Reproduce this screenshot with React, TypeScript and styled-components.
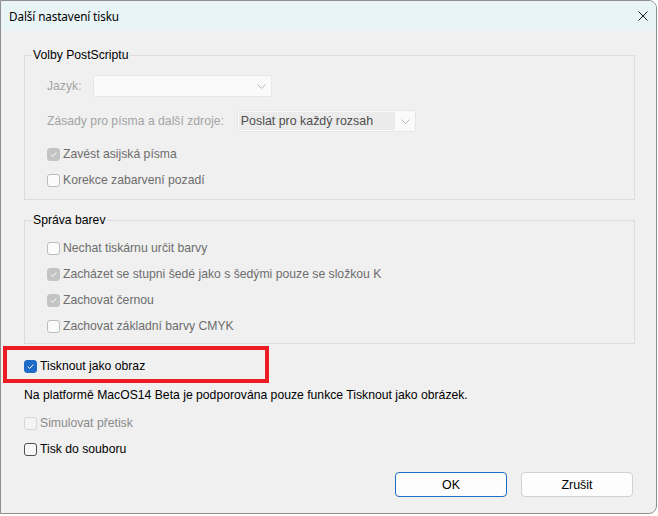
import styled, { createGlobalStyle } from 'styled-components';

const GlobalStyle = createGlobalStyle`
  html, body {
    margin: 0;
    padding: 0;
    background: #ffffff;
  }
  body {
    font-family: "Liberation Sans", Arial, sans-serif;
    font-size: 12.2px;
    color: #000;
  }
`;

const Window = styled.div`
  width: 657px;
  height: 514px;
  box-sizing: border-box;
  border: 1px solid #8f8f8f;
  border-radius: 0 8px 8px 0;
  background: #f0f0f0;
  overflow: hidden;
  display: flex;
  flex-direction: column;
`;

const TitleBar = styled.div`
  height: 30px;
  flex: none;
  background: #e9f4f7;
  display: flex;
  align-items: center;
  justify-content: space-between;
  padding: 0 8px 0 8px;
`;

const Title = styled.span`
  font-family: "Noto Sans", "Open Sans", sans-serif;
  font-size: 11.7px;
  color: #000;
  letter-spacing: -0.1px;
`;

const CloseButton = styled.button`
  width: 10px;
  height: 10px;
  padding: 0;
  border: 0;
  background: none;
  display: flex;
`;

const Body = styled.div`
  flex: 1;
  display: flex;
  flex-direction: column;
  padding: 17px 21px 0 23px;
`;

const Group = styled.fieldset<{ gap?: number }>`
  margin: ${(p) => p.gap ?? 0}px 0 0 0;
  padding: 0;
  border: 1px solid #dcdcdc;
  min-width: 0;
`;

const Legend = styled.legend`
  margin-left: 7px;
  padding: 0 1px;
  line-height: 14px;
  color: #000;
`;

const GroupBody = styled.div<{ pad: string }>`
  padding: ${(p) => p.pad};
  display: flex;
  flex-direction: column;
`;

const FieldRow = styled.div<{ top?: number; gap: number }>`
  display: flex;
  align-items: center;
  gap: ${(p) => p.gap}px;
  height: 22px;
  margin-top: ${(p) => p.top ?? 0}px;
`;

const FieldLabel = styled.span`
  color: #a4a4a4;
`;

const Select = styled.div<{ w: number }>`
  width: ${(p) => p.w}px;
  height: 22px;
  box-sizing: border-box;
  border: 1px solid #e6e6e6;
  border-radius: 2px;
  background: #fafafa;
  display: flex;
  align-items: center;
  padding: 1px 5px 1px 1px;
  gap: 6px;
`;

const SelectValue = styled.div<{ filled?: boolean }>`
  flex: 1;
  align-self: stretch;
  display: flex;
  align-items: center;
  padding-left: 2px;
  background: ${(p) => (p.filled ? '#ebebeb' : 'transparent')};
  color: #4e4e4e;
  font-size: 12.4px;
`;

const CheckRow = styled.div<{ top?: number; tone?: string }>`
  display: flex;
  align-items: center;
  height: 26px;
  margin-top: ${(p) => p.top ?? 0}px;
  color: ${(p) => p.tone ?? '#000'};
`;

type BoxKind = 'on' | 'off' | 'grayOn' | 'grayOff' | 'faintOff';

const boxFill: Record<BoxKind, string> = {
  on: '#1f6cc6',
  off: '#f7f7f7',
  grayOn: '#c3c3c3',
  grayOff: '#fbfbfb',
  faintOff: '#f4f4f4',
};

const boxEdge: Record<BoxKind, string> = {
  on: '#1f6cc6',
  off: '#505050',
  grayOn: '#c3c3c3',
  grayOff: '#bdbdbd',
  faintOff: '#d6d6d6',
};

const Box = styled.span<{ kind: BoxKind }>`
  width: 13px;
  height: 13px;
  box-sizing: border-box;
  border-radius: 3px;
  border: 1px solid ${(p) => boxEdge[p.kind]};
  background: ${(p) => boxFill[p.kind]};
  margin-right: 3px;
  display: flex;
  align-items: center;
  justify-content: center;
  flex: none;
`;

const Highlight = styled.div`
  margin: 2px 0 0 -21px;
  width: 266px;
  height: 37px;
  box-sizing: border-box;
  border: 4px solid #ed1c24;
  padding: 3px 0 0 17px;
`;

const Note = styled.p`
  margin: 5px 0 0 0;
  line-height: 14px;
`;

const Actions = styled.div`
  display: flex;
  justify-content: flex-end;
  gap: 14px;
  margin-top: 10px;
  padding-right: 2px;
`;

const Button = styled.button<{ primary?: boolean }>`
  width: 112px;
  height: 25px;
  box-sizing: border-box;
  border-radius: 4px;
  border: 1px solid ${(p) => (p.primary ? '#1a6fc4' : '#d2d2d2')};
  background: #fdfdfd;
  font-family: "Liberation Sans", Arial, sans-serif;
  font-size: 12.4px;
  color: #000;
  padding: 0;
`;

function Chevron() {
  return (
    <svg width="9" height="5" viewBox="0 0 9 5">
      <path d="M0.5 0.5 L4.5 4.5 L8.5 0.5" fill="none" stroke="#b8b8b8" strokeWidth="1" />
    </svg>
  );
}

function Checkbox({ kind }: { kind: BoxKind }) {
  const checked = kind === 'on' || kind === 'grayOn';
  return (
    <Box kind={kind}>
      {checked && (
        <svg width="9" height="9" viewBox="0 0 9 9">
          <path d="M1.8 4.6 L3.7 6.4 L7.3 2.6" fill="none" stroke="#ffffff" strokeWidth="1" />
        </svg>
      )}
    </Box>
  );
}

export default function App() {
  return (
    <>
      <GlobalStyle />
      <Window>
        <TitleBar>
          <Title>Další nastavení tisku</Title>
          <CloseButton aria-label="Zavřít">
            <svg width="10" height="10" viewBox="0 0 10 10">
              <path d="M0.5 0.5 L9.5 9.5 M9.5 0.5 L0.5 9.5" stroke="#1a1a1a" strokeWidth="1" />
            </svg>
          </CloseButton>
        </TitleBar>
        <Body>
          <Group>
            <Legend>Volby PostScriptu</Legend>
            <GroupBody pad="13px 20px 6px 22px">
              <FieldRow gap={11}>
                <FieldLabel>Jazyk:</FieldLabel>
                <Select w={179}>
                  <SelectValue />
                  <Chevron />
                </Select>
              </FieldRow>
              <FieldRow top={13} gap={13}>
                <FieldLabel>Zásady pro písma a další zdroje:</FieldLabel>
                <Select w={179}>
                  <SelectValue filled>Poslat pro každý rozsah</SelectValue>
                  <Chevron />
                </Select>
              </FieldRow>
              <CheckRow top={9} tone="#6d6d6d">
                <Checkbox kind="grayOn" />
                Zavést asijská písma
              </CheckRow>
              <CheckRow tone="#6d6d6d">
                <Checkbox kind="grayOff" />
                Korekce zabarvení pozadí
              </CheckRow>
            </GroupBody>
          </Group>

          <Group gap={13}>
            <Legend>Správa barev</Legend>
            <GroupBody pad="8px 20px 4px 22px">
              <CheckRow tone="#6d6d6d">
                <Checkbox kind="grayOff" />
                Nechat tiskárnu určit barvy
              </CheckRow>
              <CheckRow tone="#6d6d6d">
                <Checkbox kind="grayOn" />
                Zacházet se stupni šedé jako s šedými pouze se složkou K
              </CheckRow>
              <CheckRow tone="#6d6d6d">
                <Checkbox kind="grayOn" />
                Zachovat černou
              </CheckRow>
              <CheckRow tone="#6d6d6d">
                <Checkbox kind="grayOff" />
                Zachovat základní barvy CMYK
              </CheckRow>
            </GroupBody>
          </Group>

          <Highlight>
            <CheckRow>
              <Checkbox kind="on" />
              Tisknout jako obraz
            </CheckRow>
          </Highlight>

          <Note>Na platformě MacOS14 Beta je podporována pouze funkce Tisknout jako obrázek.</Note>

          <CheckRow top={8} tone="#8a8a8a">
            <Checkbox kind="faintOff" />
            Simulovat přetisk
          </CheckRow>
          <CheckRow>
            <Checkbox kind="off" />
            Tisk do souboru
          </CheckRow>

          <Actions>
            <Button primary>OK</Button>
            <Button>Zrušit</Button>
          </Actions>
        </Body>
      </Window>
    </>
  );
}
